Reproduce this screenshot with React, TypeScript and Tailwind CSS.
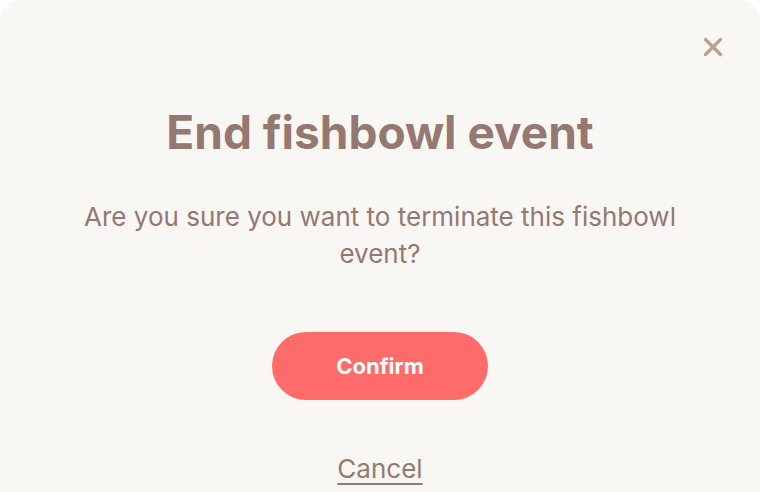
import { X } from 'lucide-react';

const App = () => {
  return (
    <div className="w-[760px] h-[492px] bg-white overflow-hidden" style={{ fontFamily: 'Inter, "Open Sans", sans-serif' }}>
      <div className="relative w-[760px] h-[540px] bg-[#f9f7f4] rounded-[22px] flex flex-col items-center pt-[104px]">
        <button className="absolute top-[32px] right-[32px] text-[#b99f8f]">
          <X size={30} strokeWidth={2.6} />
        </button>
        <h1 className="text-[46px] leading-[56px] font-bold text-[#957870]">End fishbowl event</h1>
        <p className="mt-[38px] w-[620px] text-center text-[26px] leading-[37px] text-[#957870]">
          Are you sure you want to terminate this fishbowl event?
        </p>
        <button className="mt-[60px] w-[216px] h-[68px] rounded-full bg-[#fd6b6b] text-white text-[22px] font-bold">
          Confirm
        </button>
        <a className="mt-[53px] text-[26px] leading-[32px] text-[#957870] underline underline-offset-[5px]">Cancel</a>
      </div>
    </div>
  );
};

export default App;
